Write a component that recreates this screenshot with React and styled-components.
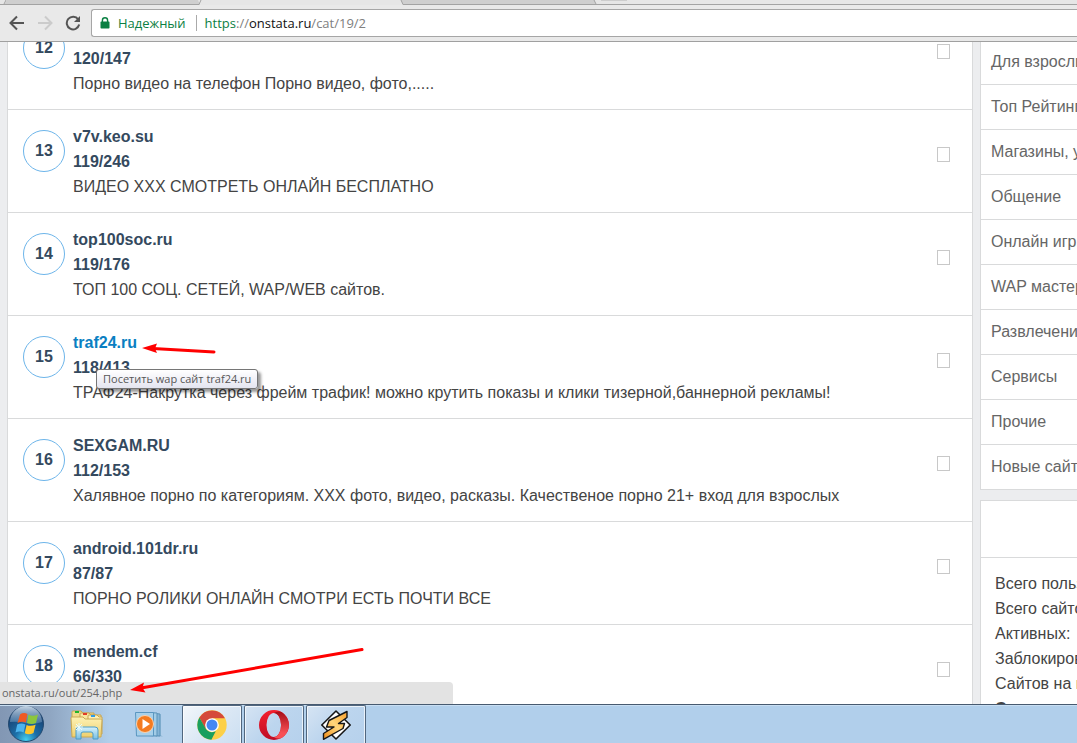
import React from 'react';
import styled, { createGlobalStyle } from 'styled-components';

const sites = [
  { place: 12, name: '', stats: '120/147', text: 'Порно видео на телефон Порно видео, фото,.....' },
  { place: 13, name: 'v7v.keo.su', stats: '119/246', text: 'ВИДЕО ХХХ СМОТРЕТЬ ОНЛАЙН БЕСПЛАТНО' },
  { place: 14, name: 'top100soc.ru', stats: '119/176', text: 'ТОП 100 СОЦ. СЕТЕЙ, WAP/WEB сайтов.' },
  {
    place: 15,
    name: 'traf24.ru',
    stats: '118/413',
    text: 'ТРАФ24-Накрутка через фрейм трафик! можно крутить показы и клики тизерной,баннерной рекламы!',
    tip: 'Посетить wap сайт traf24.ru',
  },
  {
    place: 16,
    name: 'SEXGAM.RU',
    stats: '112/153',
    text: 'Халявное порно по категориям. ХХХ фото, видео, расказы. Качественое порно 21+ вход для взрослых',
  },
  { place: 17, name: 'android.101dr.ru', stats: '87/87', text: 'ПОРНО РОЛИКИ ОНЛАЙН СМОТРИ ЕСТЬ ПОЧТИ ВСЕ' },
  { place: 18, name: 'mendem.cf', stats: '66/330', text: '' },
];

const categories = [
  'Для взрослых',
  'Топ Рейтинги',
  'Магазины, услуги',
  'Общение',
  'Онлайн игры',
  'WAP мастеру',
  'Развлечения',
  'Сервисы',
  'Прочие',
  'Новые сайты',
];

const totals = ['Всего пользователей', 'Всего сайтов', 'Активных:', 'Заблокировано', 'Сайтов на модерации'];

const BackIcon = () => (
  <svg width="16" height="16" viewBox="0 0 16 16" fill="none" stroke="currentColor" strokeWidth="2">
    <path d="M15 8H2M8 1.5L1.5 8L8 14.5" />
  </svg>
);

const ForwardIcon = () => (
  <svg width="16" height="16" viewBox="0 0 16 16" fill="none" stroke="currentColor" strokeWidth="2">
    <path d="M1 8H14M8 1.5L14.5 8L8 14.5" />
  </svg>
);

const ReloadIcon = () => (
  <svg width="16" height="16" viewBox="0 0 16 16">
    <path d="M13.2 4.4A6.3 6.3 0 1 0 14.2 9.6" fill="none" stroke="currentColor" strokeWidth="2" />
    <path d="M15 1V7H9Z" fill="currentColor" />
  </svg>
);

const LockIcon = () => (
  <svg width="10" height="12" viewBox="0 0 10 12">
    <path d="M2.4 5V3.4a2.6 2.6 0 0 1 5.2 0V5" fill="none" stroke="#0b8043" strokeWidth="1.4" />
    <rect x="0.5" y="4.6" width="9" height="6.9" rx="0.8" fill="#0b8043" />
  </svg>
);

const StartIcon = () => (
  <svg width="38" height="38" viewBox="0 0 38 38">
    <defs>
      <radialGradient id="orb" cx="50%" cy="95%" r="80%">
        <stop offset="0" stopColor="#43d0f0" />
        <stop offset="0.4" stopColor="#1c6fa8" />
        <stop offset="1" stopColor="#183f70" />
      </radialGradient>
      <linearGradient id="orbShine" x1="0" y1="0" x2="0" y2="1">
        <stop offset="0" stopColor="#e3eef8" stopOpacity="0.85" />
        <stop offset="1" stopColor="#8bb2d4" stopOpacity="0.35" />
      </linearGradient>
    </defs>
    <circle cx="19" cy="19" r="17.5" fill="url(#orb)" stroke="#24496f" />
    <path d="M3 17A16 16 0 0 1 35 17Q27 20 19 18Q10 16 3 17Z" fill="url(#orbShine)" />
    <g transform="translate(1 0)">
      <path d="M12 9.500Q15.500 7 19.500 9L17.800 17.500Q13.500 16 9.500 18Z" fill="#ef5a24" />
      <path d="M20.500 9.500Q24.500 12 30 9.500L28 18Q23.500 20 18.900 18Z" fill="#8cc63e" />
      <path d="M9.200 19.500Q13.500 17.500 17.400 19.500L15.600 27.500Q12 25.500 7.500 27.500Z" fill="#4cb4ee" />
      <path d="M18.600 20Q22.500 21.800 27.600 19.800L25.500 27.900Q21 30.200 16.800 28.200Z" fill="#fdc62c" />
    </g>
  </svg>
);

const ExplorerIcon = () => (
  <svg width="34" height="32" viewBox="0 0 34 32">
    <defs>
      <linearGradient id="folder" x1="0" y1="0" x2="0" y2="1">
        <stop offset="0" stopColor="#fdf2b5" />
        <stop offset="1" stopColor="#efcf6d" />
      </linearGradient>
      <linearGradient id="rack" x1="0" y1="0" x2="0" y2="1">
        <stop offset="0" stopColor="#d6f2fc" />
        <stop offset="1" stopColor="#78bfe3" />
      </linearGradient>
    </defs>
    <path d="M2 4Q2 3 3 3H11L13 5H24V24H2Z" fill="#f0dc8c" stroke="#c7a552" />
    <rect x="5" y="3" width="4" height="2" fill="#21b52a" />
    <path d="M10 6Q10 5 11 5H19L21 7H31V25H10Z" fill="#f9e79f" stroke="#c7a552" />
    <rect x="13" y="5" width="4" height="2" fill="#e23b28" />
    <path d="M18 8Q18 7 19 7H27L29 9H32V26H18Z" fill="#fcf0b5" stroke="#c7a552" />
    <rect x="21" y="7" width="4" height="2" fill="#2f9be8" />
    <path d="M2 9H13L15 11H31Q32 11 32 12L31 29H2L1 10Q1 9 2 9Z" fill="url(#folder)" stroke="#c9a954" />
    <path d="M6 31V22Q6 19 9 19H25Q28 19 28 22V31H23V26Q23 24 21 24H13Q11 24 11 26V31Z" fill="url(#rack)" stroke="#4b9cc8" />
    <path d="M9 15V23M5 19H13M6 16L12 22M12 16L6 22" stroke="#e6faff" />
  </svg>
);

const PlayerIcon = () => (
  <svg width="30" height="28" viewBox="0 0 30 28">
    <path d="M22 4L26.500 4.500V25L29 26.500L22 26.500Z" fill="#8fb6d4" />
    <path d="M17 3L26 4V26L17 25.500Z" fill="#84b4d6" stroke="#5b93ba" />
    <path d="M14 2.500L23 3V26L14 25.500Z" fill="#a2cce6" stroke="#5b93ba" />
    <path d="M1.500 2.500H19.500V26H2.500Z" fill="#a7d0ea" stroke="#5a96c0" />
    <circle cx="11" cy="14" r="8.500" fill="#f47b20" stroke="#fbd2ae" />
    <path d="M8.500 9L16 14L8.500 19Z" fill="#fff" />
  </svg>
);

const ChromeIcon = () => (
  <svg width="30" height="30" viewBox="0 0 48 48">
    <circle cx="24" cy="24" r="23.500" fill="#fcd048" />
    <path d="M24 24L13.600 30L3.800 12A23.500 23.500 0 0 1 44.600 13H24Z" fill="#d5493b" />
    <path d="M3.800 12L14 30Q18 35.500 24 35.500L30 34L23 47.500A23.500 23.500 0 0 1 3.800 12Z" fill="#1a9f5f" />
    <circle cx="24" cy="24" r="11" fill="#fff" />
    <circle cx="24" cy="24" r="8.800" fill="#4587f3" />
  </svg>
);

const OperaIcon = () => (
  <svg width="30" height="30" viewBox="0 0 30 30">
    <defs>
      <linearGradient id="operaLeft" x1="0" y1="0" x2="0" y2="1">
        <stop offset="0" stopColor="#f4202f" />
        <stop offset="1" stopColor="#bd0d25" />
      </linearGradient>
      <linearGradient id="operaRight" x1="0" y1="0" x2="0" y2="1">
        <stop offset="0" stopColor="#a50d18" />
        <stop offset="0.8" stopColor="#f85055" />
      </linearGradient>
    </defs>
    <path
      d="M15 0A15 15 0 0 0 15 30A15 15 0 0 0 15 0ZM14.800 3A7.300 12 0 0 1 14.800 27A7.300 12 0 0 1 14.800 3Z"
      fill="url(#operaLeft)"
      fillRule="evenodd"
    />
    <path
      d="M14.800 3Q18.500 0.500 22.500 2.100A15 15 0 0 1 22.500 27.900Q18.500 29.500 14.800 27A7.300 12 0 0 0 14.800 3Z"
      fill="url(#operaRight)"
    />
  </svg>
);

const WinampIcon = () => (
  <svg width="30" height="30" viewBox="0 0 30 30">
    <defs>
      <linearGradient id="bolt" x1="1" y1="0" x2="0" y2="1">
        <stop offset="0" stopColor="#f9a02c" />
        <stop offset="0.5" stopColor="#ffd67c" />
        <stop offset="1" stopColor="#f08a14" />
      </linearGradient>
    </defs>
    <path d="M15 1L29.200 15L15 29L0.800 15Z" fill="#fff" stroke="#161616" strokeWidth="1.600" strokeLinejoin="round" />
    <path
      d="M26 1.500L8 10.500L5.500 17H13L2.500 23.500V29.300L22 18.500L23.500 13.500H17.500L26 7.500Z"
      fill="url(#bolt)"
      stroke="#161616"
      strokeWidth="1.400"
      strokeLinejoin="round"
    />
  </svg>
);

const App = () => {
  return (
    <Page>
      <GlobalStyle />
      <TabStrip viewBox="0 0 1077 5" preserveAspectRatio="xMinYMin slice">
        <rect width="1077" height="5" fill="#e6e6e6" />
        <path d="M7 0H198L200 5H4Z" fill="#cfcfcf" />
        <path d="M401 0L403 5H596L594 0Z" fill="#cfcfcf" />
        <path d="M0 4.500H199L201 0M401 0L403 4.500H1077M4 4L6 0M594 0L596 4" fill="none" stroke="#a3a3a3" />
        <path d="M601 0H627" stroke="#cdcdcd" strokeWidth="2" />
      </TabStrip>
      <Toolbar>
        <NavButtons>
          <NavButton aria-label="Назад"><BackIcon /></NavButton>
          <NavButton aria-label="Вперёд" disabled><ForwardIcon /></NavButton>
          <NavButton aria-label="Обновить"><ReloadIcon /></NavButton>
        </NavButtons>
        <AddressBar>
          <LockIcon />
          <Secure>Надежный</Secure>
          <Url>
            <Scheme>https</Scheme>://<Host>onstata.ru</Host>/cat/19/2
          </Url>
        </AddressBar>
      </Toolbar>

      <Viewport>
        <Content>
          <SiteList>
            {sites.map((site) => (
              <SiteRow key={site.place}>
                <Place>{site.place}</Place>
                <SiteInfo>
                  <SiteName href="#" $active={!!site.tip}>{site.name}</SiteName>
                  <Stats>{site.stats}</Stats>
                  <Description>{site.text}</Description>
                  {site.tip && <Tip role="tooltip">{site.tip}</Tip>}
                </SiteInfo>
                <Glyph />
              </SiteRow>
            ))}
          </SiteList>
          <Sidebar>
            <SideNav>
              {categories.map((category) => (
                <SideLink href="#" key={category}>{category}</SideLink>
              ))}
            </SideNav>
            <SidePanel>
              <SideTitle />
              <Totals>
                {totals.map((line) => (
                  <p key={line}>{line}</p>
                ))}
                <strong>С</strong>
              </Totals>
            </SidePanel>
          </Sidebar>
        </Content>
        <StatusBubble>onstata.ru/out/254.php</StatusBubble>
      </Viewport>

      <Taskbar>
        <StartButton aria-label="Пуск"><StartIcon /></StartButton>
        <PinnedButton aria-label="Проводник"><ExplorerIcon /></PinnedButton>
        <PinnedButton aria-label="Проигрыватель"><PlayerIcon /></PinnedButton>
        <Running>
          <TaskButton aria-label="Chrome" $active><ChromeIcon /></TaskButton>
          <TaskButton aria-label="Opera"><OperaIcon /></TaskButton>
          <TaskButton aria-label="Winamp"><WinampIcon /></TaskButton>
        </Running>
      </Taskbar>

      {/* red pointers drawn over the page */}
      <NameArrow width="76" height="14" viewBox="0 0 76 14">
        <path d="M12 6.500L73 10" stroke="#f00" strokeWidth="3" strokeLinecap="round" />
        <path d="M1 6L16 1.500L14 6.500L16 11Z" fill="#f00" />
      </NameArrow>
      <StatusArrow width="236" height="48" viewBox="0 0 236 48">
        <path d="M12 41L233 2.500" stroke="#f00" strokeWidth="3" strokeLinecap="round" />
        <path d="M1 43L15 35.500L13.500 40.800L16.500 45.500Z" fill="#f00" />
      </StatusArrow>
    </Page>
  );
};

const GlobalStyle = createGlobalStyle`
  * {
    box-sizing: border-box;
  }
  body {
    margin: 0;
    font-family: "Liberation Sans", Arial, sans-serif;
  }
  p {
    margin: 0;
  }
`;

const Page = styled.div`
  position: relative;
  display: flex;
  flex-direction: column;
  height: 100vh;
  overflow: hidden;
  background: #ecedef;
`;

const TabStrip = styled.svg`
  flex: none;
  width: 100%;
  height: 5px;
`;

const Toolbar = styled.header`
  display: flex;
  flex: none;
  align-items: center;
  gap: 10px;
  height: 37px;
  padding-left: 9px;
  background: #e9e9e9;
  border-bottom: 1px solid #a0a0a0;
`;

const NavButtons = styled.div`
  display: flex;
  gap: 12px;
`;

const NavButton = styled.button`
  display: flex;
  padding: 0;
  border: 0;
  background: none;
  color: ${(props) => (props.disabled ? '#cbcbcb' : '#555')};
`;

const AddressBar = styled.div`
  display: flex;
  flex: 1;
  align-items: center;
  height: 28px;
  padding-left: 8px;
  border: 1px solid #a6a6a6;
  border-right: 0;
  border-radius: 3px 0 0 3px;
  background: #fff;
  font: 13px/16px "Open Sans", "Noto Sans", sans-serif;
`;

const Secure = styled.span`
  margin-left: 8px;
  padding-right: 10px;
  border-right: 1px solid #aaa;
  color: #0b8043;
`;

const Url = styled.span`
  margin-left: 8px;
  color: #808080;
`;

const Scheme = styled.span`
  color: #0b8043;
`;

const Host = styled.span`
  color: #111;
`;

const Viewport = styled.main`
  position: relative;
  flex: 1;
  min-height: 0;
  overflow: hidden;
`;

const Content = styled.div`
  display: grid;
  grid-template-columns: minmax(0, 1fr) 97px;
  gap: 7px;
  margin-top: -35px;
  padding-left: 7px;
`;

const SiteList = styled.section`
  border: 1px solid #d9dadb;
  border-width: 0 1px;
  background: #fff;
`;

const SiteRow = styled.article`
  display: flex;
  gap: 8px;
  height: 103px;
  padding: 14px 22px 13px 15px;
  border-bottom: 1px solid #d9dadb;
  font-size: 16px;
  line-height: 25px;
`;

const Place = styled.div`
  flex: none;
  width: 42px;
  height: 42px;
  margin-top: 6px;
  border: 1px solid #6db5ea;
  border-radius: 50%;
  color: #34495e;
  font-weight: bold;
  line-height: 40px;
  text-align: center;
`;

const SiteInfo = styled.div`
  position: relative;
  flex: 1;
  min-width: 0;
`;

const SiteName = styled.a`
  display: block;
  min-height: 25px;
  color: ${(props) => (props.$active ? '#0a7fc2' : '#34495e')};
  font-weight: bold;
  text-decoration: none;
`;

const Stats = styled.p`
  color: #34495e;
  font-weight: bold;
`;

const Description = styled.p`
  color: #444;
  white-space: nowrap;
`;

const Tip = styled.span`
  position: absolute;
  top: 39px;
  left: 23px;
  padding: 0 6px;
  border: 1px solid #767676;
  border-radius: 3px;
  background: linear-gradient(#fff, #e4e5f0);
  box-shadow: 3px 3px 3px rgba(0, 0, 0, 0.4);
  color: #575757;
  font: 11px/18px "Open Sans", "Noto Sans", sans-serif;
  white-space: nowrap;
`;

const Glyph = styled.i`
  flex: none;
  width: 13px;
  height: 15px;
  margin-top: 23px;
  border: 1px solid #c8c8c8;
`;

const Sidebar = styled.aside`
  display: flex;
  flex-direction: column;
  gap: 10px;
  min-width: 0;
  padding-top: 33px;
  white-space: nowrap;
`;

const SideNav = styled.nav`
  overflow: hidden;
  border-left: 1px solid #d9dadb;
  background: #fff;
`;

const SideLink = styled.a`
  display: block;
  height: 45px;
  padding-left: 10px;
  border-bottom: 1px solid #d9dadb;
  color: #666;
  font-size: 16px;
  line-height: 44px;
  text-decoration: none;
`;

const SidePanel = styled.section`
  overflow: hidden;
  border: 1px solid #d9dadb;
  border-right: 0;
  background: #fff;
`;

const SideTitle = styled.div`
  height: 57px;
  border-bottom: 1px solid #d9dadb;
`;

const Totals = styled.div`
  padding: 13px 14px;
  color: #444;
  font-size: 16px;
  line-height: 25px;
`;

const StatusBubble = styled.div`
  position: absolute;
  bottom: 0;
  left: 0;
  width: 453px;
  padding-left: 2px;
  border-top-right-radius: 4px;
  background: #e3e3e3;
  color: #666;
  font: 11px/22px "Open Sans", "Noto Sans", sans-serif;
`;

const Taskbar = styled.footer`
  display: flex;
  flex: none;
  align-items: center;
  height: 39px;
  padding-left: 7px;
  border-top: 1px solid #475a70;
  background: linear-gradient(90deg, #8297b4 0, #8fa6c2 50px, #b1cfeb 110px);
  box-shadow: inset 0 1px #c8def2;
`;

const StartButton = styled.button`
  display: flex;
  margin-right: 11px;
  padding: 0;
  border: 0;
  background: none;
`;

const PinnedButton = styled.button`
  display: flex;
  justify-content: center;
  width: 62px;
  padding: 0;
  border: 0;
  background: none;
`;

const Running = styled.div`
  display: flex;
  align-self: stretch;
  gap: 2px;
  margin-left: 2px;
`;

const TaskButton = styled.button`
  display: flex;
  align-items: center;
  justify-content: center;
  width: 60px;
  padding: 0;
  border: 1px solid #51677f;
  border-bottom: 0;
  border-radius: 2px 2px 0 0;
  background: ${(props) =>
    props.$active
      ? 'linear-gradient(135deg, #f3f7fb, #dce8f5 50%, #cbdff2)'
      : 'linear-gradient(135deg, #d6e4f3, #bcd5ee 50%, #b6d1ec)'};
  box-shadow: inset 1px 1px rgba(255, 255, 255, 0.7), inset -1px 0 rgba(255, 255, 255, 0.7);
`;

const NameArrow = styled.svg`
  position: absolute;
  top: 342px;
  left: 141px;
  fill: none;
`;

const StatusArrow = styled.svg`
  position: absolute;
  bottom: 48px;
  left: 129px;
  fill: none;
`;

export default App;
